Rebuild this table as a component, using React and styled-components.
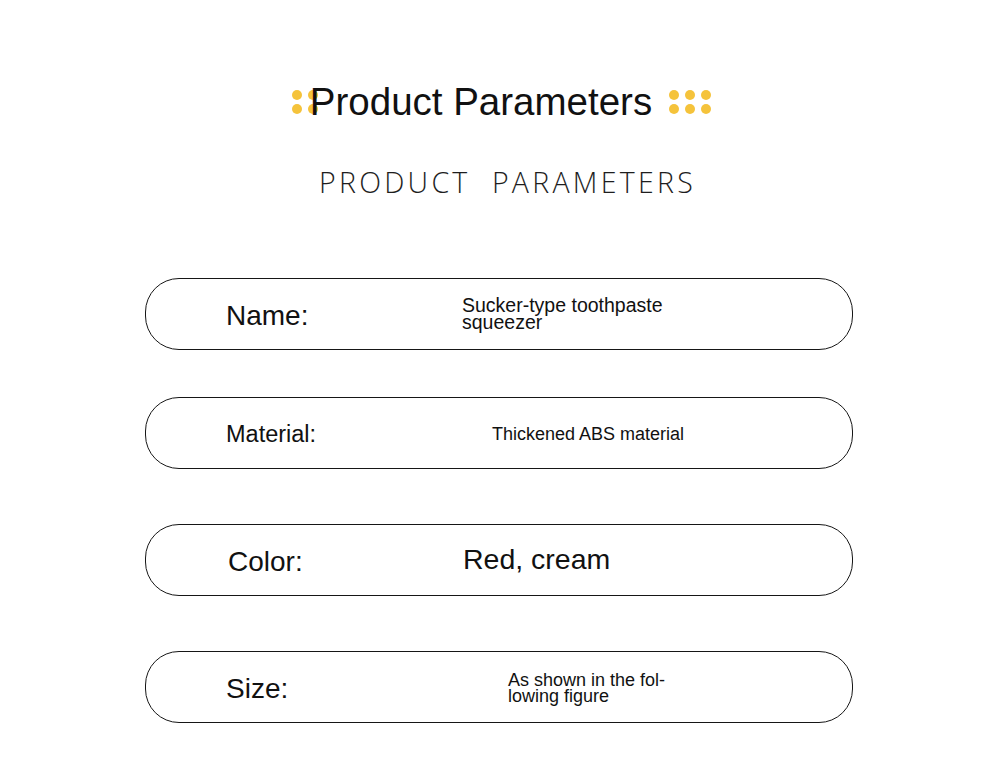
import React from "react";
import styled, { createGlobalStyle } from "styled-components";

const Global = createGlobalStyle`
  html, body { margin: 0; padding: 0; background: #ffffff; }
  body { font-family: "Liberation Sans", Arial, sans-serif; color: #111; }
`;

const Page = styled.div`
  width: 990px;
  height: 769px;
  overflow: hidden;
  background: #fff;
  display: flex;
  flex-direction: column;
`;

const HeadingRow = styled.div`
  margin-top: 83px;
  padding-left: 13px;
  display: flex;
  align-items: center;
  justify-content: center;
`;

const Dots = styled.div`
  display: grid;
  grid-template-columns: repeat(${(p) => p.$cols}, 10px);
  column-gap: 6px;
  row-gap: 4.5px;
  margin-right: ${(p) => p.$mr || 0}px;
  margin-left: ${(p) => p.$ml || 0}px;
`;

const Dot = styled.span`
  width: 10px;
  height: 10px;
  border-radius: 50%;
  background: #f5c33b;
  display: block;
`;

const Heading = styled.h1`
  position: relative;
  z-index: 1;
  margin: 0;
  font-family: "Liberation Sans", Arial, sans-serif;
  font-weight: 400;
  font-size: 38.5px;
  line-height: 38px;
  color: #111;
`;

const Subtitle = styled.h2`
  margin: 47px 0 0;
  text-align: center;
  padding-left: 25px;
  font-family: "Open Sans", "Noto Sans", sans-serif;
  font-weight: 300;
  font-size: 28.5px;
  line-height: 28px;
  letter-spacing: 3.27px;
  color: #1e1e1e;
  white-space: pre;
`;

const List = styled.div`
  margin-top: 82px;
  padding-left: 145px;
  display: flex;
  flex-direction: column;
`;

const Pill = styled.div`
  box-sizing: border-box;
  width: 708px;
  height: 72px;
  margin-top: ${(p) => p.$mt}px;
  border: 1.5px solid #161616;
  border-radius: 34px;
  padding-left: 80px;
  display: grid;
  grid-template-columns: ${(p) => p.$split}px 1fr;
  align-items: center;
`;

const Label = styled.div`
  font-size: ${(p) => p.$size}px;
  line-height: 1;
  color: #111;
  margin-top: ${(p) => p.$dy || 0}px;
  margin-left: ${(p) => p.$dx || 0}px;
`;

const Value = styled.div`
  font-size: ${(p) => p.$size}px;
  line-height: ${(p) => p.$lh || "1.1"};
  color: #111;
  margin-top: ${(p) => p.$dy || 0}px;
  margin-left: ${(p) => p.$dx || 0}px;
`;

const rows = [
  { label: "Name:", lsize: 28, ldy: 4, split: 236, mt: 0, value: ["Sucker-type toothpaste", "squeezer"], vsize: 19.5, lh: "17px", vdy: 0 },
  { label: "Material:", lsize: 23.5, ldy: 4, split: 266, mt: 47, value: ["Thickened ABS material"], vsize: 18, vdy: 4 },
  { label: "Color:", lsize: 28, ldy: 4, ldx: 2, split: 235, mt: 55, value: ["Red, cream"], vsize: 28.5, vdx: 2, vdy: 0 },
  { label: "Size:", lsize: 28, ldy: 4, ldx: 0, split: 282, mt: 55, value: ["As shown in the fol-", "lowing figure"], vsize: 18, lh: "16px", vdy: 2 },
];

export default function App() {
  return (
    <>
      <Global />
      <Page>
        <HeadingRow>
          <Dots $cols={2} $mr={-8}>
            {Array.from({ length: 4 }).map((_, i) => (
              <Dot key={i} />
            ))}
          </Dots>
          <Heading>Product Parameters</Heading>
          <Dots $cols={3} $ml={17}>
            {Array.from({ length: 6 }).map((_, i) => (
              <Dot key={i} />
            ))}
          </Dots>
        </HeadingRow>
        <Subtitle>{"PRODUCT  PARAMETERS"}</Subtitle>
        <List>
          {rows.map((r) => (
            <Pill key={r.label} $mt={r.mt} $split={r.split}>
              <Label $size={r.lsize} $dy={r.ldy} $dx={r.ldx}>{r.label}</Label>
              <Value $size={r.vsize} $lh={r.lh} $dy={r.vdy} $dx={r.vdx}>
                {r.value.map((line, i) => (
                  <React.Fragment key={i}>
                    {i > 0 && <br />}
                    {line}
                  </React.Fragment>
                ))}
              </Value>
            </Pill>
          ))}
        </List>
      </Page>
    </>
  );
}
